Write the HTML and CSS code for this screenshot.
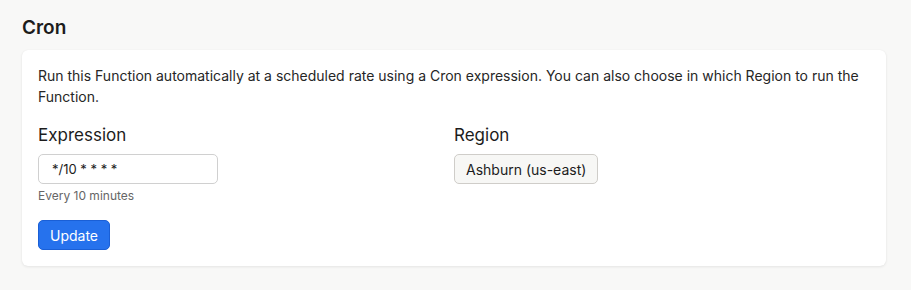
FILE: index.html
```html
<!DOCTYPE html>
<html lang="en">
<head>
    <meta charset="UTF-8">
    <meta name="viewport" content="width=device-width, initial-scale=1.0">
    <title>Cron</title>
    <link rel="stylesheet" href="styles.css">
</head>
<body>
    <div class="page">
        <h2 class="title">Cron</h2>
        <div class="card">
            <p class="desc">Run this Function automatically at a scheduled rate using a Cron expression. You can also choose in which Region to run the Function.</p>
            <div class="fields">
                <div class="field">
                    <label class="label" for="expr">Expression</label>
                    <input id="expr" class="text-input" type="text" value="*/10 * * * *">
                    <div class="hint">Every 10 minutes</div>
                    <button class="btn">Update</button>
                </div>
                <div class="field">
                    <div class="label">Region</div>
                    <button class="select">Ashburn (us-east)</button>
                </div>
            </div>
        </div>
    </div>
</body>
</html>
```

FILE: styles.css
```css
body {
    background-color: #f8f8f7;
    color: #1c1c1c;
    font-family: Inter, "Noto Sans", sans-serif;
    margin: 0;
}

.page {
    padding: 17px 25px 24px 22px;
}

.title {
    font-size: 19px;
    font-weight: 600;
    margin: 0 0 11px 0;
    line-height: 22px;
}

.card {
    background-color: #ffffff;
    border-radius: 6px;
    box-shadow: 0 1px 3px rgba(0, 0, 0, 0.08), 0 0 1px rgba(0, 0, 0, 0.06);
    padding: 15px 16px 16px 16px;
}

.desc {
    font-size: 14px;
    line-height: 21px;
    margin: 0 0 16px 0;
    color: #262626;
}

.fields {
    display: grid;
    grid-template-columns: 1fr 1fr;
}

.field {
    display: flex;
    flex-direction: column;
    align-items: flex-start;
}

.label {
    font-size: 17px;
    line-height: 24px;
    margin-bottom: 7px;
}

.text-input {
    width: 180px;
    height: 30px;
    box-sizing: border-box;
    border: 1px solid #d0d0d0;
    border-radius: 5px;
    padding: 0 13px;
    font-family: inherit;
    font-size: 13px;
    color: #1c1c1c;
}

.hint {
    font-size: 12px;
    color: #666666;
    margin-top: 4px;
    line-height: 16px;
}

.btn {
    margin-top: 16px;
    background-color: #2672ed;
    border: 1px solid #1a5fd6;
    color: #ffffff;
    border-radius: 5px;
    height: 30px;
    padding: 0 11px;
    font-family: inherit;
    font-size: 14px;
    cursor: pointer;
}

.select {
    height: 30px;
    box-sizing: border-box;
    background-color: #f7f7f5;
    border: 1px solid #cfcdc9;
    border-radius: 5px;
    padding: 0 11px;
    font-family: inherit;
    font-size: 14px;
    color: #1c1c1c;
}
```
